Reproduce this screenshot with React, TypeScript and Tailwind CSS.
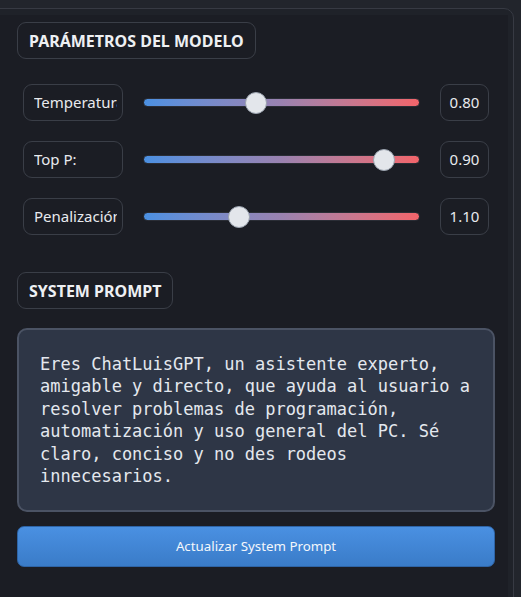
import React from "react";

const ui = { fontFamily: '"Noto Sans", "Open Sans", sans-serif' };
const mono = { fontFamily: '"DejaVu Sans Mono", "Liberation Mono", monospace' };

const PARAMS = [
  { label: "Temperatura:", value: "0.80", frac: 0.4 },
  { label: "Top P:", value: "0.90", frac: 0.9 },
  { label: "Penalización:", value: "1.10", frac: 0.333 },
];

const PROMPT = [
  "Eres ChatLuisGPT, un asistente experto,",
  "amigable y directo, que ayuda al usuario a",
  "resolver problemas de programación,",
  "automatización y uso general del PC. Sé",
  "claro, conciso y no des rodeos",
  "innecesarios.",
];

function Badge({ children }: { children: React.ReactNode }) {
  return (
    <div className="inline-flex h-[37px] items-center rounded-[9px] border border-[#3a3e47] px-[11px] text-[16px] font-bold text-[#eef0f3]">
      {children}
    </div>
  );
}

function SliderRow({ label, value, frac }: { label: string; value: string; frac: number }) {
  return (
    <div className="flex h-[37px] items-center">
      <div className="flex h-full w-[100px] shrink-0 items-center overflow-hidden whitespace-nowrap rounded-[9px] border border-[#3a3e47] pl-[10px] pr-[5px] text-[15px] text-[#e8eaee]">
        <span className="overflow-hidden">{label}</span>
      </div>
      <div className="relative ml-[20px] flex h-[22px] w-[277px] items-center">
        <div className="h-[9px] w-full rounded-full border border-[#2a2d35] bg-gradient-to-r from-[#4a90e2] via-[#9a82b0] to-[#f2646a]" />
        <div
          className="absolute top-0 h-[22px] w-[22px] rounded-full border border-[#9aa2ae] bg-[#e3e6eb]"
          style={{ left: `${frac * 255}px` }}
        />
      </div>
      <div className="ml-[20px] flex h-full w-[49px] items-center justify-center rounded-[9px] border border-[#3a3e47] text-[15px] text-[#e8eaee]">
        {value}
      </div>
    </div>
  );
}

export default function App() {
  return (
    <div className="h-[597px] w-[521px] overflow-hidden bg-[#22252c] pt-[8px]" style={ui}>
      <div className="ml-[-10px] h-[620px] w-[524px] rounded-tr-[10px] border border-[#373a43] bg-[#1f2229] pr-[5px] pt-[6px]">
        <div className="h-full bg-[#1b1d24] pl-[26px] pt-[7px]">
          <div className="w-[478px]">
            <Badge>PARÁMETROS DEL MODELO</Badge>

            <div className="mt-[25px] flex flex-col gap-[20px] px-[6px]">
              {PARAMS.map((p) => (
                <SliderRow key={p.label} {...p} />
              ))}
            </div>

            <div className="mt-[37px]">
              <Badge>SYSTEM PROMPT</Badge>
            </div>

            <div
              className="mt-[19px] h-[184px] rounded-[10px] border-2 border-[#4b5364] bg-[#2e3646] pl-[21px] pt-[23px] text-[17px] leading-[22.4px] text-[#e4e8ee]"
              style={mono}
            >
              {PROMPT.map((line) => (
                <div key={line} className="whitespace-pre">
                  {line}
                </div>
              ))}
            </div>

            <button className="mt-[14px] flex h-[41px] w-full items-center justify-center rounded-[7px] border border-[#2e64a6] bg-gradient-to-b from-[#4a90e2] to-[#3a7cc8] text-[13.3px] text-[#f4f7fb]">
              Actualizar System Prompt
            </button>
          </div>
        </div>
      </div>
    </div>
  );
}
